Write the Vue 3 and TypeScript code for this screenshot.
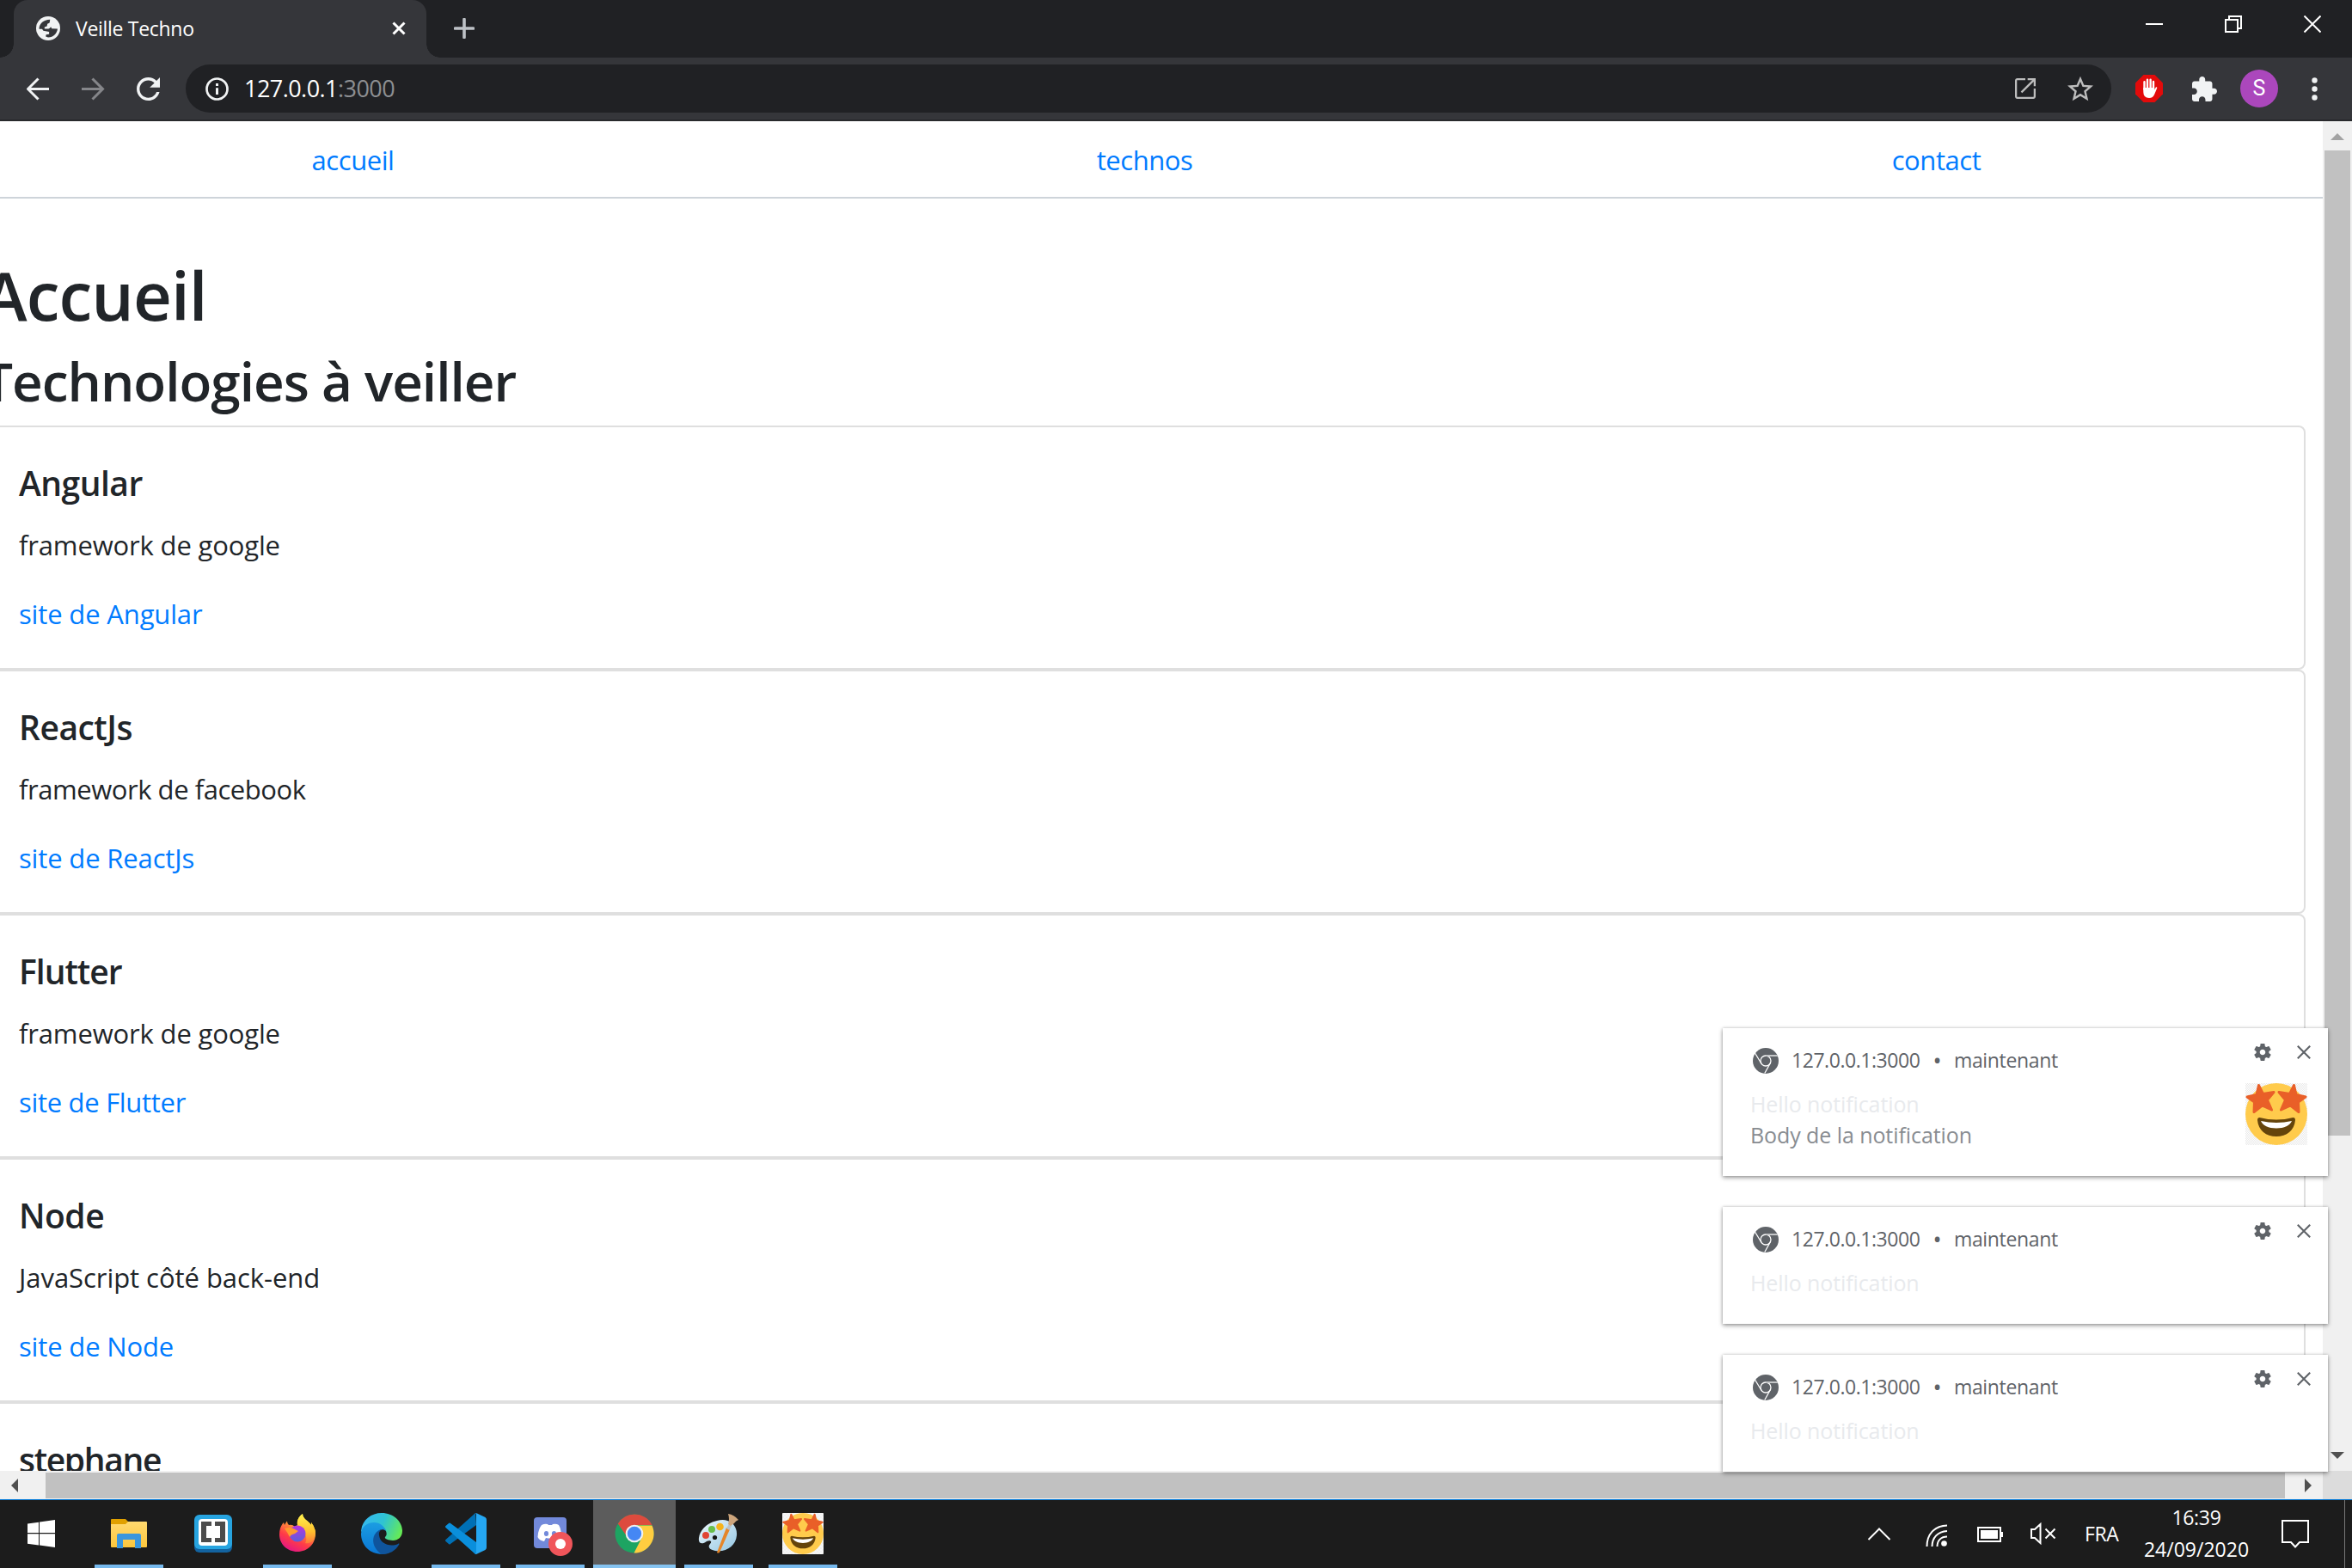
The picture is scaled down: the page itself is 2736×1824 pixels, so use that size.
<script setup lang="ts">
interface Techno {
  name: string
  description: string
}

interface Toast {
  id: number
  title: string
  body?: string
}

interface TaskIcon {
  id: string
  open: boolean
  active?: boolean
}

const links: string[] = ['accueil', 'technos', 'contact']

const technos: Techno[] = [
  { name: 'Angular', description: 'framework de google' },
  { name: 'ReactJs', description: 'framework de facebook' },
  { name: 'Flutter', description: 'framework de google' },
  { name: 'Node', description: 'JavaScript côté back-end' },
  { name: 'stephane', description: '' },
]

const toasts: Toast[] = [
  { id: 1, title: 'Hello notification', body: 'Body de la notification' },
  { id: 2, title: 'Hello notification' },
  { id: 3, title: 'Hello notification' },
]

const tasks: TaskIcon[] = [
  { id: 'explorer', open: true },
  { id: 'brackets', open: false },
  { id: 'firefox', open: true },
  { id: 'edge', open: false },
  { id: 'vscode', open: true },
  { id: 'discord', open: true },
  { id: 'chrome', open: true, active: true },
  { id: 'paint', open: true },
  { id: 'emoji', open: true },
]
</script>

<template>
  <div class="screen">
    <svg class="defs" width="0" height="0">
      <defs>
        <pattern id="checker" width="2" height="2" patternUnits="userSpaceOnUse">
          <rect width="2" height="2" fill="#fff" /><rect width="1" height="1" fill="#e9e9e9" /><rect x="1" y="1" width="1" height="1" fill="#e9e9e9" />
        </pattern>
        <linearGradient id="ff1" x1="0.8" y1="0" x2="0.3" y2="1"><stop offset="0" stop-color="#fff44f" /><stop offset="0.35" stop-color="#ffa436" /><stop offset="0.7" stop-color="#ff3b47" /><stop offset="1" stop-color="#e31587" /></linearGradient>
        <linearGradient id="ff2" x1="0" y1="0" x2="0" y2="1"><stop offset="0" stop-color="#b833e1" /><stop offset="1" stop-color="#5b5fd8" /></linearGradient>
        <linearGradient id="ff3" x1="0" y1="0" x2="0" y2="1"><stop offset="0" stop-color="#fff44f" /><stop offset="0.6" stop-color="#ffc02e" /><stop offset="1" stop-color="#ff7a3a" /></linearGradient>
        <linearGradient id="ed1" x1="0" y1="0.3" x2="1" y2="0.6"><stop offset="0" stop-color="#35b8f1" /><stop offset="0.5" stop-color="#2fc3d2" /><stop offset="1" stop-color="#66eb55" /></linearGradient>
        <linearGradient id="ed2" x1="0" y1="0" x2="0" y2="1"><stop offset="0" stop-color="#1b9de2" /><stop offset="1" stop-color="#0a76d4" /></linearGradient>
        <linearGradient id="fold" x1="0" y1="0" x2="0" y2="1"><stop offset="0" stop-color="#ffd970" /><stop offset="1" stop-color="#fcc63c" /></linearGradient>
        <linearGradient id="pal" x1="0" y1="0" x2="1" y2="1"><stop offset="0" stop-color="#eef7fc" /><stop offset="1" stop-color="#94c7e3" /></linearGradient>
      </defs>
      <symbol id="star-face" viewBox="0 0 72 72">
        <rect width="72" height="72" rx="1" fill="url(#checker)" />
        <circle cx="36" cy="36" r="36" fill="#ffcb4c" />
        <g fill="#e95f28" stroke="#e95f28" stroke-width="3" stroke-linejoin="round">
          <path d="M15.500 2.500L20.500 12.500L33 10.500L25.500 19.500L30.500 31L19.500 26L10 33.500L10.500 22L2 16L13 13.500Z" />
          <path d="M56.500 2.500L51.500 12.500L39 10.500L46.500 19.500L41.500 31L52.500 26L62 33.500L61.500 22L70 16L59 13.500Z" />
        </g>
        <path d="M16.500 40Q36 45 55.500 40Q58 40 58 43C57 55 48 62 36 62S15 55 14 43Q14 40 16.500 40Z" fill="#65440b" />
        <path d="M18 44Q36 48 54 44C52 49 45 52.500 36 52.500S20 49 18 44Z" fill="#fff" />
      </symbol>
    </svg>

    <header class="tabstrip">
      <div class="tab">
        <svg class="globe" viewBox="2 2 20 20"><circle cx="12" cy="12" r="10" fill="#f1f3f4" /><path d="M4.500 12.600C4.500 8.300 8 4.700 13.600 4.700L13.200 7.300L11.400 8.300L11 10.300L9 11V12.300H12.300Q13.300 12.300 14.300 10.800L15 12.200L19.800 12.400C19.500 16.300 16.300 19.500 12 19.500L10 18.800L10.300 17.200L12.800 16.800V14.800L8 14L7 12.600Z" fill="#35363a" /></svg>
        <span class="tab-title">Veille Techno</span>
        <svg class="tab-close" viewBox="0 0 16 16"><path d="M1.500 1.500L14.500 14.500M14.500 1.500L1.500 14.500" stroke="#fff" stroke-width="3" /></svg>
      </div>
      <svg class="plus" viewBox="0 0 24 24"><path d="M12 1.500V22.500M1.500 12H22.500" stroke="#bdc1c6" stroke-width="3.600" stroke-linecap="round" /></svg>
      <div class="win-buttons">
        <svg viewBox="0 0 20 20"><path d="M0 10H20" stroke="#fff" stroke-width="2" /></svg>
        <svg viewBox="0 0 20 20"><path d="M1 5H15V19H1ZM5 5V1H19V15H15" fill="none" stroke="#fff" stroke-width="2" /></svg>
        <svg viewBox="0 0 20 20"><path d="M.5 .5L19.500 19.500M19.500 .5L.5 19.500" stroke="#fff" stroke-width="2" /></svg>
      </div>
    </header>

    <div class="toolbar">
      <span class="cell"><svg class="i27" viewBox="0 0 27 27"><path d="M26 13.500H2M13.500 1.500L1.500 13.500L13.500 25.500" fill="none" stroke="#f1f3f4" stroke-width="3" /></svg></span>
      <span class="cell"><svg class="i27" viewBox="0 0 27 27"><path d="M0 13.500H24M12.500 1.500L24.500 13.500L12.500 25.500" fill="none" stroke="#85868a" stroke-width="3" /></svg></span>
      <span class="cell"><svg class="i27" viewBox="4 4 16 16"><path fill="#f1f3f4" d="M17.650 6.350C16.200 4.900 14.210 4 12 4c-4.420 0-7.990 3.580-7.990 8s3.570 8 7.990 8c3.730 0 6.840-2.550 7.730-6h-2.080c-.82 2.330-3.040 4-5.650 4-3.310 0-6-2.690-6-6s2.690-6 6-6c1.660 0 3.140.69 4.220 1.780L13 11h7V4l-2.350 2.350z" /></svg></span>
      <div class="omnibox">
        <svg class="info" viewBox="0 0 27 27"><circle cx="13.500" cy="13.500" r="12" fill="none" stroke="#f1f3f4" stroke-width="2.700" /><path d="M13.500 7V10M13.500 12.200V20" stroke="#f1f3f4" stroke-width="3" /></svg>
        <span class="url">127.0.0.1<span class="port">:3000</span></span>
        <span class="cell push"><svg class="i24" viewBox="3 3 18 18"><path fill="#bdbdbd" d="M19 19.300H4.700V4.700H12V3H5c-1.110 0-2 .9-2 2v14c0 1.100.89 2 2 2h14c1.100 0 2-.9 2-2v-7h-1.700v7zM14 3v1.700h4l-10 10 1.200 1.200L19.300 6V10H21V3h-7z" /></svg></span>
        <span class="cell"><svg class="i30" viewBox="2 1.500 20 20"><path fill="#bdbdbd" d="M22 9.240l-7.190-.62L12 2 9.190 8.630 2 9.240l5.460 4.730L5.820 21 12 17.270 18.180 21l-1.630-7.030L22 9.240zM12 15.400l-3.760 2.270 1-4.280-3.320-2.880 4.380-.38L12 6.100l1.710 4.040 4.380.38-3.320 2.880 1 4.280L12 15.400z" /></svg></span>
      </div>
      <span class="cell"><svg class="i32" viewBox="0 0 32 32"><path d="M9.500 0H22.500L32 9.500V22.500L22.500 32H9.500L0 22.500V9.500Z" fill="#e30b0b" /><path d="M10.500 8.200V17M14 5.600V16M17.600 5.600V16M21 8V17" stroke="#fff" stroke-width="2.400" stroke-linecap="round" /><path d="M9.300 15H22.200V17.500L23.800 14.500Q25.600 13.800 25.200 15.500L22.300 22.500Q20.500 27 16 27Q9.300 27 9.300 20Z" fill="#fff" /></svg></span>
      <span class="cell"><svg class="i29" viewBox="2 1 21 21"><path fill="#f1f3f4" d="M20.500 11H19V7c0-1.100-.9-2-2-2h-4V3.500C13 2.120 11.880 1 10.500 1S8 2.120 8 3.500V5H4c-1.100 0-1.990.9-1.990 2v3.800H3.500c1.490 0 2.700 1.210 2.700 2.700s-1.210 2.700-2.700 2.700H2V20c0 1.100.9 2 2 2h3.800v-1.500c0-1.490 1.210-2.700 2.700-2.700 1.490 0 2.700 1.210 2.700 2.700V22H17c1.100 0 2-.9 2-2v-4h1.500c1.380 0 2.500-1.120 2.500-2.500S21.880 11 20.500 11z" /></svg></span>
      <span class="cell"><span class="avatar">S</span></span>
      <span class="cell"><svg class="i27" viewBox="0 0 27 27" fill="#f1f3f4"><circle cx="13.500" cy="3.500" r="3.200" /><circle cx="13.500" cy="13.500" r="3.200" /><circle cx="13.500" cy="23.500" r="3.200" /></svg></span>
    </div>

    <div class="viewport">
      <main class="page">
        <nav class="nav">
          <a v-for="link in links" :key="link">{{ link }}</a>
        </nav>
        <div class="container">
          <h1>Accueil</h1>
          <h2>Technologies à veiller</h2>
          <section v-for="t in technos" :key="t.name" class="card" :class="t.name.toLowerCase()">
            <h5>{{ t.name }}</h5>
            <p>{{ t.description }}</p>
            <a>site de {{ t.name }}</a>
          </section>
        </div>
      </main>
      <aside class="vscroll">
        <svg width="16" height="8" viewBox="0 0 16 8"><path d="M0 8L8 0L16 8Z" fill="#a3a3a3" /></svg>
        <div class="vthumb"></div>
        <svg class="down" width="16" height="8" viewBox="0 0 16 8"><path d="M0 0L8 8L16 0Z" fill="#505050" /></svg>
      </aside>
    </div>
    <div class="hscroll">
      <svg width="8" height="16" viewBox="0 0 8 16"><path d="M8 0L0 8L8 16Z" fill="#505050" /></svg>
      <div class="hthumb"></div>
      <svg width="8" height="16" viewBox="0 0 8 16"><path d="M0 0L8 8L0 16Z" fill="#505050" /></svg>
      <div class="corner"></div>
    </div>

    <div class="toasts">
      <article v-for="toast in toasts" :key="toast.id" class="toast" :class="{ tall: toast.body }">
        <div class="toast-main">
          <div class="toast-head">
            <svg class="chrome-mono" viewBox="0 0 30 30"><circle cx="15" cy="15" r="15" fill="#5f6368" /><g fill="none" stroke="#fff" stroke-width="1.300"><circle cx="15" cy="15" r="6" /><path d="M15 9H29" stroke="#c4c6c8" stroke-width="2" /><path d="M9.800 18L2.500 6M20.200 18L13.800 29.500" /></g></svg>
            <span class="origin">127.0.0.1:3000</span>
            <span class="bullet">•</span>
            <span class="when">maintenant</span>
          </div>
          <div class="toast-title">{{ toast.title }}</div>
          <div v-if="toast.body" class="toast-body">{{ toast.body }}</div>
        </div>
        <div class="toast-side">
          <div class="toast-actions">
            <svg width="20" height="20" viewBox="2.300 2.300 19.400 19.400"><path fill="#5f6368" fill-rule="evenodd" d="M19.140 12.940c.04-.3.06-.61.06-.94 0-.32-.02-.64-.07-.94l2.030-1.580c.18-.14.23-.41.12-.61l-1.920-3.320c-.12-.22-.37-.29-.59-.22l-2.390.96c-.5-.38-1.030-.7-1.620-.94l-.36-2.540c-.04-.24-.24-.41-.48-.41h-3.840c-.24 0-.43.17-.47.41l-.36 2.540c-.59.24-1.130.57-1.620.94l-2.390-.96c-.22-.08-.47 0-.59.22L2.740 8.870c-.12.21-.08.47.12.61l2.030 1.580c-.05.3-.09.63-.09.94s.02.64.07.94l-2.030 1.580c-.18.14-.23.41-.12.61l1.920 3.320c.12.22.37.29.59.22l2.390-.96c.5.38 1.030.7 1.620.94l.36 2.540c.05.24.24.41.48.41h3.840c.24 0 .44-.17.47-.41l.36-2.540c.59-.24 1.130-.56 1.620-.94l2.390.96c.22.08.47 0 .59-.22l1.920-3.320c.12-.22.07-.47-.12-.61l-2.010-1.580zM12 15.200c-1.750 0-3.200-1.450-3.200-3.200s1.450-3.200 3.200-3.200 3.200 1.450 3.200 3.200-1.450 3.200-3.200 3.200z" /></svg>
            <svg width="16" height="16" viewBox="0 0 16 16"><path d="M.8 .8L15.200 15.200M15.200 .8L.8 15.200" stroke="#5f6368" stroke-width="2.100" /></svg>
          </div>
          <svg v-if="toast.body" width="72" height="72"><use href="#star-face" /></svg>
        </div>
      </article>
    </div>

    <footer class="taskbar">
      <div class="start">
        <svg width="32" height="32" viewBox="0 0 32 32"><path d="M0 4.500L13 2.800V15H0ZM14 2.600L32 0V15H14ZM0 16.200H13V29.400L0 27.700ZM14 16.200H32V32L14 29.600Z" fill="#fff" /></svg>
      </div>
      <div v-for="task in tasks" :key="task.id" class="task" :class="{ open: task.open, active: task.active }">
        <svg width="48" height="48" viewBox="0 0 48 48">
          <g v-if="task.id === 'explorer'">
            <path d="M3 8Q3 7 4 7H20L23 10V14H3Z" fill="#e0a000" />
            <path d="M3 13H20L23 10H44Q45 10 45 11V39Q45 40 44 40H4Q3 40 3 39Z" fill="url(#fold)" />
            <path d="M12 24H36Q38 24 38 26V41H31V31H17V41H10V26Q10 24 12 24Z" fill="#3a96dd" />
          </g>
          <g v-else-if="task.id === 'brackets'">
            <rect x="2" y="6" width="44" height="40" rx="6" fill="#1363a0" />
            <rect x="2" y="2" width="44" height="40" rx="6" fill="#27a4e0" />
            <rect x="7" y="7" width="34" height="31" rx="4" fill="#fff" />
            <path d="M22 10H10V34H22V29H16V15H22ZM26 10H38V34H26V29H32V15H26Z" fill="#4c4c4c" />
          </g>
          <g v-else-if="task.id === 'firefox'">
            <path d="M45 24C45 36 36 45 24 45S3 36 3 25C3 19 5 14 8 11L9 14Q11 10 12 9.500Q12 12 14 14Q18 13 21 16L24 14C23 8 26 4 30 1C30 7 37 9 40 14L40 11Q45 17 45 24Z" fill="url(#ff1)" />
            <path d="M30 1C30 7 37 9 40 14L40 11Q45 17 45 24C44 33 39 36 33 35C36 30 34 20 24 14C23 8 26 4 30 1Z" fill="url(#ff3)" />
            <circle cx="24" cy="24" r="9.500" fill="url(#ff2)" />
            <path d="M9 18Q15 16 19 18Q23 20 25 21L21 24Q16 25 15 28Q12 22 9 18Z" fill="#ff9a2e" />
          </g>
          <g v-else-if="task.id === 'edge'">
            <path d="M0 23C0 9 11 0 24 0C38 0 48 10 48 21C48 28 43 32 37 32C31 32 27 30 28 28C30 26 30 24 29 21C26 15 20 12 14 12C7 12 2 17 0 23Z" fill="url(#ed1)" />
            <path d="M0 24C1 15 8 11 15 11C23 11 28 17 29 21C25 17 18 20 18 28C18 36 24 44 33 44C37 44 34 46 31 47C14 51 0 40 0 24Z" fill="url(#ed2)" />
            <path d="M21 20C11 26 12 40 24 48C33 48 40 44 44 37C45 36 44 35 43 36C34 40 22 36 21 26Q20 22 24 19Z" fill="#0f549c" />
          </g>
          <g v-else-if="task.id === 'vscode'">
            <path d="M35 0L36 14L6 36Q5 37 4 36L.5 33Q-.5 32 .5 31Z" fill="#0070b5" />
            <path d="M36 48L35 48L.5 17Q-.5 16 .5 15L4 12Q5 11 6 12L36 34Z" fill="#0a8fdc" />
            <path d="M35 0Q36 0 37 .5L46.500 5Q48 6 48 8V40Q48 42 46.500 43L37 47.500Q36 48 35 48Q36 47 36 46V2Q36 1 35 0Z" fill="#25a7f2" />
          </g>
          <g v-else-if="task.id === 'discord'">
            <rect x="5" y="5" width="38" height="36" rx="4" fill="#7289da" />
            <path d="M14 14Q18 12 21 13L22 14H26L27 13Q31 12 34 14Q37 19 37 27Q35 32 29 32L28 29Q24 30 19 29L17 33Q11 32 9.500 28Q10 19 14 14Z" fill="#fff" />
            <ellipse cx="19.500" cy="24" rx="2.600" ry="3" fill="#7289da" /><ellipse cx="28.500" cy="24" rx="2.600" ry="3" fill="#7289da" />
            <circle cx="36" cy="36" r="14" fill="#f0555a" /><circle cx="36" cy="36" r="6" fill="#fff" />
          </g>
          <g v-else-if="task.id === 'chrome'">
            <circle cx="24" cy="24" r="22.500" fill="#1da462" />
            <path d="M24 14.500H44.500A22.500 22.500 0 0 1 23.500 46.500L32.500 29Z" fill="#ffcd40" />
            <path d="M24 1.500A22.500 22.500 0 0 1 44.500 14H24L15 27L4.800 12.500A22.500 22.500 0 0 1 24 1.500Z" fill="#dd4b3e" />
            <circle cx="24" cy="24" r="10.300" fill="#f1f1f1" /><circle cx="24" cy="24" r="8.200" fill="#4587f4" />
          </g>
          <g v-else-if="task.id === 'paint'">
            <path d="M22 9C36 5 46 14 45 26C44 38 33 46 20 44C13 43 11 39 14 36C17 33 14 31 10 33C5 37 0 36 1 29C2 20 11 11 22 9Z" fill="url(#pal)" />
            <circle cx="19.500" cy="28.500" r="2.600" fill="#151515" />
            <circle cx="9" cy="26" r="4" fill="#e04434" /><circle cx="16" cy="19" r="4" fill="#67bf4b" /><circle cx="25.500" cy="16" r="4.300" fill="#f6b21b" />
            <path d="M33 17L37 19L25 46Q23 47 22 46Z" fill="#e5862a" />
            <path d="M36 13L39 15L36.500 20L33 18Z" fill="#b9c2c9" />
            <path d="M35 1Q42 2 47 8Q44 9 42 12L38 15L35 13Q37 7 35 1Z" fill="#cda57c" />
          </g>
          <use v-else href="#star-face" width="48" height="48" />
        </svg>
      </div>
      <div class="tray">
        <svg class="chevron" width="28" height="16" viewBox="0 0 28 16"><path d="M1.500 15L14 2.500L26.500 15" fill="none" stroke="#fff" stroke-width="2" /></svg>
        <svg class="wifi" width="26" height="26" viewBox="0 0 26 26"><g fill="none" stroke="#fff" stroke-width="2"><path d="M1.500 26C1.500 12 10 2 25 1.500M7.500 26C7.500 16 14 8.500 25 8M13.500 26C13.500 19 18 14.500 25 14.500" /></g><circle cx="21.500" cy="22.500" r="3.300" fill="#fff" /></svg>
        <svg class="battery" width="30" height="18" viewBox="0 0 30 18"><path d="M1 1H27V17H1Z" fill="none" stroke="#fff" stroke-width="2" /><path d="M4 4H24V14H4ZM28 6H30V12H28Z" fill="#fff" /></svg>
        <svg class="sound" width="30" height="26" viewBox="0 0 30 26"><path d="M1 8H5L11.500 2V24L5 18H1Z" fill="none" stroke="#fff" stroke-width="2" /><path d="M17.500 7.500L28.500 18.500M28.500 7.500L17.500 18.500" stroke="#fff" stroke-width="2" /></svg>
        <span class="lang">FRA</span>
        <div class="clock"><span class="time">16:39</span><span class="date">24/09/2020</span></div>
        <svg class="center" width="32" height="34" viewBox="0 0 32 34"><path d="M1 1H31V26H21L16 31.500L11 26H1Z" fill="none" stroke="#fff" stroke-width="2" /></svg>
        <div class="peek"></div>
      </div>
    </footer>
  </div>
</template>

<style>
body { margin: 0; overflow: hidden; }
</style>

<style scoped>
.screen { position: relative; width: 2736px; height: 1824px; overflow: hidden; display: flex; flex-direction: column; background: #fff; font-family: "Open Sans", "Noto Sans", sans-serif; color: #212529; }
.defs { position: absolute; }
svg { display: block; flex: none; }
.tabstrip { height: 67px; display: flex; align-items: flex-start; background: #202124; flex: none; }
.tab { position: relative; margin-left: 16px; width: 480px; height: 67px; box-sizing: border-box; padding: 0 24px 1px 26px; border-radius: 16px 16px 0 0; background: #35363a; display: flex; align-items: center; }
.tab::before, .tab::after { content: ""; position: absolute; bottom: 0; width: 16px; height: 16px; }
.tab::before { left: -16px; background: radial-gradient(circle at 0 0, transparent 15.5px, #35363a 16px); }
.tab::after { right: -16px; background: radial-gradient(circle at 100% 0, transparent 15.5px, #35363a 16px); }
.globe { width: 28px; height: 28px; }
.tab-title { margin-left: 18px; flex: 1; color: #fff; font-size: 23px; line-height: 64px; letter-spacing: -0.3px; white-space: nowrap; }
.tab-close { width: 16px; height: 16px; }
.plus { width: 24px; height: 24px; margin: 21px 0 0 32px; }
.win-buttons { margin: 18px 36px 0 auto; display: flex; gap: 72px; }
.win-buttons svg { width: 20px; height: 20px; }
.toolbar { height: 74px; box-sizing: border-box; padding: 0 12px; border-bottom: 2px solid #28292c; background: #35363a; display: flex; align-items: center; flex: none; }
.cell { width: 64px; display: flex; justify-content: center; align-items: center; flex: none; }
.i24 { width: 24px; height: 24px; }
.i27 { width: 27px; height: 27px; }
.i29 { width: 29px; height: 29px; }
.i30 { width: 30px; height: 30px; }
.i32 { width: 32px; height: 32px; }
.omnibox { flex: 1; height: 56px; margin: 0 12px; box-sizing: border-box; padding: 0 4px 0 23px; border-radius: 28px; background: #202124; display: flex; align-items: center; }
.info { width: 27px; height: 27px; }
.url { margin-left: 18px; color: #fff; font-size: 27px; line-height: 54px; letter-spacing: -0.55px; }
.port { color: #8d8f92; }
.push { margin-left: auto; }
.avatar { width: 44px; height: 44px; border-radius: 50%; background: #ab47bc; color: #fff; font-family: Roboto, sans-serif; font-size: 25px; line-height: 44px; text-align: center; }
.viewport { height: 1570px; display: flex; flex: none; }
.page { width: 2702px; height: 1570px; overflow: hidden; }
.nav { height: 88px; border-bottom: 2px solid #ced4da; display: flex; }
.nav a { width: 921px; flex: none; text-align: center; color: #007bff; font-size: 31px; line-height: 90px; letter-spacing: -0.45px; }
.nav a:first-child { margin-left: -50px; }
.container { margin-left: -20px; width: 2702px; padding-top: 64px; }
h1, h2, h5, p { margin: 0; }
h1 { font-size: 78px; line-height: 96px; font-weight: 600; letter-spacing: -0.9px; margin-bottom: 14px; }
h2 { font-size: 62px; line-height: 77px; font-weight: 600; letter-spacing: -1px; margin-bottom: 13px; }
.card { height: 284px; box-sizing: border-box; border: 2px solid #dfdfdf; border-radius: 8px; padding: 41px 40px 0; }
h5 { font-size: 39px; line-height: 48px; font-weight: 600; letter-spacing: -0.5px; }
.card p { margin-top: 24px; height: 48px; font-size: 31px; line-height: 48px; letter-spacing: -0.15px; }
.card a { display: block; margin-top: 32px; font-size: 31px; line-height: 48px; letter-spacing: -0.15px; color: #007bff; }
.card.reactjs p { letter-spacing: -0.45px; }
.card.flutter h5 { letter-spacing: -1px; }
.card.flutter a { letter-spacing: -0.3px; }
.card.node p { letter-spacing: -0.05px; }
.card.stephane h5 { letter-spacing: -1.35px; }
.vscroll { width: 34px; background: #f0f0f0; display: flex; flex-direction: column; align-items: center; padding: 14px 0; box-sizing: border-box; }
.vthumb { width: 30px; height: 1146px; margin-top: 12px; background: #c1c1c1; }
.down { margin-top: auto; }
.hscroll { height: 33px; background: #f0f0f0; display: flex; align-items: center; padding-left: 13px; border-bottom: 1px solid #0078d7; flex: none; }
.hthumb { width: 2605px; height: 30px; margin: 0 23px 0 32px; background: #c1c1c1; }
.corner { margin-left: auto; width: 34px; height: 33px; background: #dcdcdc; }
.toasts { position: absolute; left: 2004px; top: 1196px; width: 704px; display: flex; flex-direction: column; gap: 36px; }
.toast { height: 136px; background: #fff; box-shadow: 0 2px 5px rgba(0, 0, 0, 0.38), 0 0 3px rgba(0, 0, 0, 0.18); display: flex; justify-content: space-between; }
.toast.tall { height: 172px; }
.toast-main { padding: 20px 0 0 32px; }
.toast-head { display: flex; align-items: center; height: 36px; padding-left: 3px; font-size: 23px; line-height: 34px; color: #5f6368; }
.chrome-mono { width: 30px; height: 30px; }
.origin { margin-left: 15px; width: 150px; letter-spacing: -0.45px; white-space: nowrap; position: relative; top: -1px; }
.bullet { width: 39px; text-align: center; font-size: 27px; }
.when { letter-spacing: -0.35px; position: relative; top: -1px; }
.toast-title { margin-top: 14px; font-size: 25px; line-height: 36px; letter-spacing: -0.1px; color: #e8eaed; }
.toast-body { font-size: 25px; line-height: 36px; letter-spacing: -0.08px; color: #888c91; }
.toast-side { padding: 18px 20px 0 0; display: flex; flex-direction: column; align-items: flex-end; gap: 26px; }
.toast-actions { display: flex; align-items: center; gap: 30px; }
.toast-side > svg { margin-right: 4px; }
.taskbar { height: 79px; background: #1c1c1c; display: flex; flex: none; }
.start { width: 96px; margin-right: 6px; padding-top: 23px; box-sizing: border-box; display: flex; justify-content: center; }
.task { width: 96px; margin-right: 2px; position: relative; padding-top: 15px; box-sizing: border-box; display: flex; justify-content: center; }
.task svg { overflow: visible; }
.task.open::after { content: ""; position: absolute; left: 8px; right: 8px; bottom: 0; height: 4px; background: #76b9ed; }
.task.active { background: #5c5c5c; }
.task.active::after { left: 0; right: 0; background: #85c3f0; }
.tray { margin-left: auto; display: flex; align-items: flex-start; color: #fff; font-size: 23px; }
.chevron { margin: 31px 40px 0 0; }
.wifi { margin: 28px 34px 0 0; }
.battery { margin: 31px 32px 0 0; }
.sound { margin: 26px 33px 0 0; }
.lang { width: 41px; line-height: 78px; letter-spacing: -0.4px; }
.clock { width: 124px; margin-left: 27px; margin-right: 2px; padding-top: 2px; display: flex; flex-direction: column; text-align: center; line-height: 37px; }
.time { letter-spacing: -0.3px; }
.date { letter-spacing: 0; white-space: nowrap; }
.center { margin: 23px 41px 0 35px; }
.peek { width: 1px; height: 79px; margin-right: 8px; background: #777; }
</style>
